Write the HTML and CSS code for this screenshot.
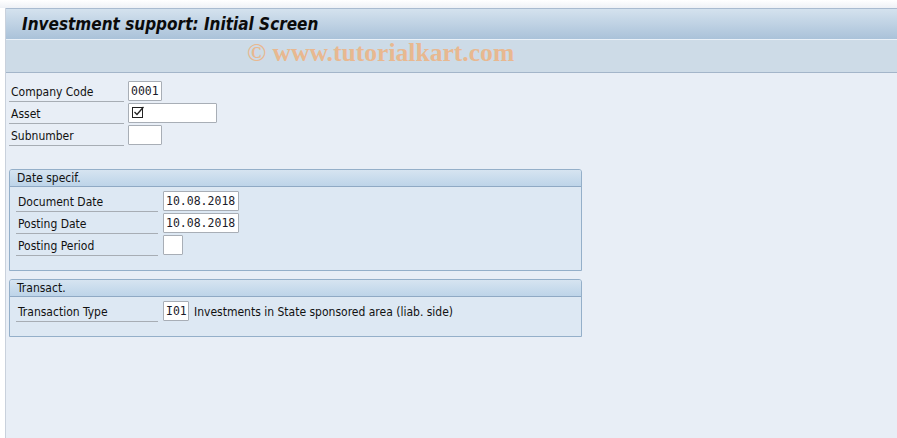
FILE: index.html
```html
<!DOCTYPE html>
<html lang="en">
<head>
  <meta charset="UTF-8" />
  <title>Investment support: Initial Screen</title>
  <link rel="stylesheet" href="styles.css">
</head>
<body>
  <div class="top-strip"></div>
  <div class="screen">
    <div class="title-bar">
      <h1>Investment support: Initial Screen</h1>
    </div>
    <div class="toolbar">
      <span class="watermark">&copy; www.tutorialkart.com</span>
    </div>

    <div class="content">
      <div class="row">
        <label class="lbl">Company Code</label>
        <div class="field w4">0001</div>
      </div>
      <div class="row">
        <label class="lbl">Asset</label>
        <div class="field w12">
          <svg class="check" width="13" height="12" viewBox="0 0 13 12">
            <rect x="0.5" y="1.5" width="10" height="10" fill="none" stroke="#222" stroke-width="1"/>
            <path d="M2.5 6 L5 8.5 L11.5 1" fill="none" stroke="#222" stroke-width="1.3"/>
          </svg>
        </div>
      </div>
      <div class="row last">
        <label class="lbl">Subnumber</label>
        <div class="field w4"></div>
      </div>

      <div class="group">
        <div class="group-head">Date specif.</div>
        <div class="group-body">
          <div class="row">
            <label class="lbl">Document Date</label>
            <div class="field w10">10.08.2018</div>
          </div>
          <div class="row">
            <label class="lbl">Posting Date</label>
            <div class="field w10">10.08.2018</div>
          </div>
          <div class="row">
            <label class="lbl">Posting Period</label>
            <div class="field w2"></div>
          </div>
        </div>
      </div>

      <div class="group">
        <div class="group-head">Transact.</div>
        <div class="group-body">
          <div class="row">
            <label class="lbl">Transaction Type</label>
            <div class="field w3">I01</div>
            <span class="desc">Investments in State sponsored area (liab. side)</span>
          </div>
        </div>
      </div>
    </div>
  </div>
</body>
</html>
```

FILE: styles.css
```css
/* SAP GUI initial screen */
html, body {
  margin: 0;
  height: 100%;
}
body {
  background: #fff;
  font-family: "DejaVu Sans Condensed", "DejaVu Sans", sans-serif;
  font-stretch: condensed;
  font-size: 12px;
  color: #111;
  overflow: hidden;
}
.top-strip {
  height: 8px;
  background: linear-gradient(#ffffff, #eef1f6);
}
.screen {
  margin-left: 5px;
  border-left: 1px solid #c9d1dc;
  height: 430px;
  background: #e8eef6;
}
.title-bar {
  height: 30px;
  border-top: 1px solid #a9bbd0;
  background: linear-gradient(#d4e2ee, #aac2d9);
  display: flex;
  align-items: center;
}
h1 {
  margin: 0 0 0 16px;
  font-size: 17px;
  font-weight: bold;
  font-style: italic;
  color: #0b0b0b;
}
.toolbar {
  height: 32px;
  border-top: 1px solid #eaf1f8;
  border-bottom: 1px solid #a3b5c9;
  background: #cddbe7;
  display: flex;
  align-items: center;
}
.watermark {
  margin: 0 0 6px 241px;
  font-family: "Liberation Serif", serif;
  font-weight: bold;
  font-size: 25.6px;
  color: #e8b890;
}
.content {
  padding: 7px 0 0 3px;
}
.row {
  display: flex;
  align-items: center;
  height: 22px;
}
.row.last {
  margin-bottom: 23px;
}
.lbl {
  width: 115px;
  height: 21px;
  line-height: 21px;
  padding: 1px 0 0 2px;
  box-sizing: border-box;
  border-bottom: 1px solid #a7adb4;
  margin-right: 4px;
  color: #111;
}
.field {
  height: 20px;
  box-sizing: border-box;
  background: #fff;
  border: 1px solid #a8aeb6;
  border-radius: 1px;
  font-family: "DejaVu Sans Mono", monospace;
  font-stretch: normal;
  font-size: 11.5px;
  line-height: 18px;
  padding-left: 2px;
  color: #1b1b2a;
}
.w2 { width: 20px; }
.w3 { width: 26px; }
.w4 { width: 34px; }
.w10 { width: 76px; }
.w12 { width: 89px; }
.check {
  display: block;
  margin-top: 2px;
  margin-left: 1px;
}
.group {
  width: 573px;
  box-sizing: border-box;
  border: 1px solid #94afc9;
  border-radius: 3px 3px 0 0;
  background: #dde8f3;
  margin-bottom: 8px;
}
.group-head {
  height: 16px;
  line-height: 16px;
  padding-left: 7px;
  border-bottom: 1px solid #8fa9c4;
  background: linear-gradient(#d6e4f1, #bdd4e9);
  border-radius: 2px 2px 0 0;
}
.group-body {
  padding: 3px 0 14px 6px;
}
.group-body .lbl {
  width: 142px;
  margin-right: 5px;
}
.desc {
  margin-left: 5px;
  padding-top: 1px;
}
```
